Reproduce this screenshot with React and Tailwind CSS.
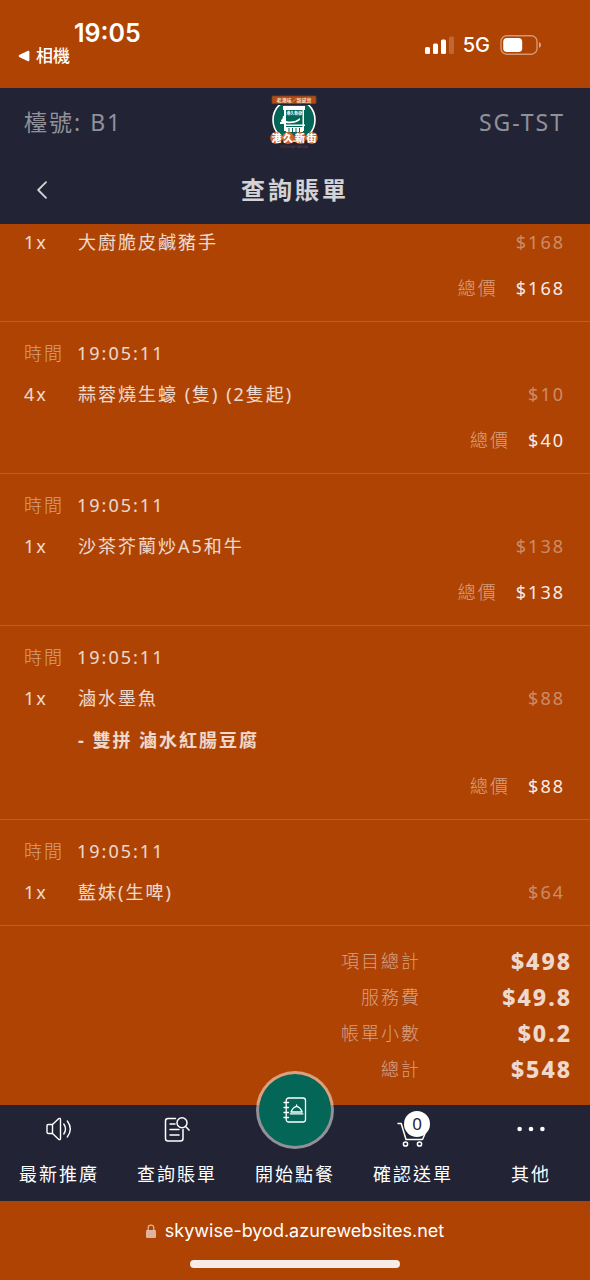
const orders = [
  { qty: 1, name: '大廚脆皮鹹豬手', price: '$168', total: '$168' },
  { time: '19:05:11', qty: 4, name: '蒜蓉燒生蠔 (隻) (2隻起)', price: '$10', total: '$40' },
  { time: '19:05:11', qty: 1, name: '沙茶芥蘭炒A5和牛', price: '$138', total: '$138' },
  { time: '19:05:11', qty: 1, name: '滷水墨魚', price: '$88', option: '- 雙拼 滷水紅腸豆腐', total: '$88' },
  { time: '19:05:11', qty: 1, name: '藍妹(生啤)', price: '$64' },
];

const summary = [
  ['項目總計', '$498'],
  ['服務費', '$49.8'],
  ['帳單小數', '$0.2'],
  ['總計', '$548'],
];

function StatusBar() {
  return (
    <div className="flex h-[88px] items-start justify-between pl-[18px] pr-12 font-['Inter','Noto_Sans_CJK_TC',sans-serif] text-white">
      <div className="pt-[18px]">
        <div className="pl-14 text-[25px] leading-[30px] font-semibold">19:05</div>
        <a href="#camera" className="flex items-center gap-[6px] text-[17px] leading-4 font-medium">
          <svg viewBox="0 0 12 12" className="size-3" fill="currentColor" aria-hidden="true">
            <path d="M1.2 5.1 10 .8q1.4-.5 1.4.9v8.6q0 1.400-1.400.9L1.200 6.900Q0 6 1.200 5.100Z" />
          </svg>
          相機
        </a>
      </div>
      <div className="flex items-center pt-[33px]">
        <svg viewBox="0 0 30 20" className="h-5 w-[30px]" fill="currentColor" aria-hidden="true">
          <rect x="0" y="12" width="5" height="7" rx="1.500" />
          <rect x="8" y="8.500" width="5" height="10.500" rx="1.500" />
          <rect x="16" y="4.500" width="5" height="14.500" rx="1.500" />
          <rect x="24" y="1.500" width="5" height="17.500" rx="1.500" opacity="0.200" />
        </svg>
        <span className="ml-2 text-xl leading-6 font-medium">5G</span>
        <svg viewBox="0 0 42 20" className="ml-[10px] h-5 w-[42px]" fill="none" aria-hidden="true">
          <rect x="1" y="0.800" width="36" height="18.400" rx="5.500" stroke="#fff" strokeOpacity="0.450" strokeWidth="1.400" />
          <rect x="3.200" y="3" width="19" height="14" rx="3.800" fill="#fff" />
          <path d="M39 7v6q2-1 2-3t-2-3Z" fill="#fff" fillOpacity="0.550" />
        </svg>
      </div>
    </div>
  );
}

function Logo() {
  return (
    <svg viewBox="0 0 48 54" className="h-[54px] w-12 tracking-normal" role="img" aria-label="港久新街">
      <circle cx="24" cy="25" r="21" fill="#046656" stroke="#fff" strokeWidth="1.600" />
      <rect x="1" y="0" width="46" height="10" fill="#222334" />
      <rect x="2" y="1" width="44" height="7.500" rx="1" fill="#b14b17" stroke="#83411f" strokeWidth="0.800" />
      <text x="24" y="6.800" textAnchor="middle" fontSize="5" fontWeight="700" fill="#f4dfce" fontFamily="'Noto Sans CJK TC', sans-serif">老港味／新感覺</text>
      <g fill="#fff">
        <path d="M13 11h22v4H13z" />
        <path d="M14 14h2v22h-2zM32.500 14h1.500v22h-1.500z" />
        <path d="M10 27h5v2h-5zM11 25q2-1 2-4h2v8h-3z" />
        <path d="M15 29.500h20v1.500H15z" />
        <path d="M16 32h17v5H16z" />
        <path d="M16 26q8 2 14-3v2q-5 4-14 3Z" />
      </g>
      <text x="24.300" y="19.500" textAnchor="middle" fontSize="4" fontWeight="700" fill="#fff" fontFamily="'Noto Sans CJK TC', sans-serif">港久新街</text>
      <path d="M19 33v4M22.500 33v4M26 33v4M29.500 33v4" stroke="#046656" strokeWidth="1" />
      <g fill="#d0652a">
        <circle cx="6.200" cy="43" r="6" />
        <circle cx="18" cy="43" r="6" />
        <circle cx="30" cy="43" r="6" />
        <circle cx="41.800" cy="43" r="6" />
      </g>
      <g fontSize="10" fontWeight="900" fill="#fff" textAnchor="middle" fontFamily="'Noto Sans CJK TC', sans-serif">
        <text x="6.400" y="46.700">港</text>
        <text x="18" y="46.700">久</text>
        <text x="30" y="46.700">新</text>
        <text x="41.600" y="46.700">街</text>
      </g>
      <text x="24" y="52.500" textAnchor="middle" fontSize="3" fill="#7b3b25" fontFamily="'Noto Sans', sans-serif">KONG KAU SAN KAI</text>
    </svg>
  );
}

function Order({ order }) {
  return (
    <section className={`border-b border-white/15 pr-[25px] pb-[19px] pl-6 ${order.time ? 'pt-[17px]' : 'pt-1'}`}>
      {order.time && (
        <div className="mb-[13px] flex gap-[13px]">
          <span className="font-light text-white/50">時間</span>
          <time className="text-white/80">{order.time}</time>
        </div>
      )}
      <div className="flex">
        <span className="w-[54px] shrink-0">{order.qty}x</span>
        <span className="grow">{order.name}</span>
        <span className="text-white/40">{order.price}</span>
      </div>
      {order.option && <div className="mt-[14px] pl-[54px] font-bold">{order.option}</div>}
      {order.total && (
        <div className="mt-[18px] flex justify-end gap-[18px]">
          <span className="font-light text-white/50">總價</span>
          <span className="text-white/90">{order.total}</span>
        </div>
      )}
    </section>
  );
}

const line = { fill: 'none', stroke: 'currentColor', strokeLinecap: 'round', strokeLinejoin: 'round' };

function SpeakerIcon() {
  return (
    <svg viewBox="0 0 26 24" className="h-6 w-[26px]" {...line} strokeWidth="1.400" aria-hidden="true">
      <path d="M6.500 7.500H2.300Q1 7.500 1 8.800v6.400q0 1.300 1.300 1.300h4.200" />
      <path d="M6.500 7.500v9M6.500 7.500 12.800 1.600q1.700-.8 1.700.9v19q0 1.700-1.700.9L6.500 16.500" />
      <path d="M17.800 7q3.400 5 0 10M21.300 4q6 8 0 16" />
    </svg>
  );
}

function BillIcon() {
  return (
    <svg viewBox="0 0 26 26" className="size-[26px]" {...line} strokeWidth="1.500" aria-hidden="true">
      <path d="M11.500 2.500H4Q1.500 2.500 1.500 5v17.500Q1.500 25 4 25h12.500q2.500 0 2.500-2.500v-9" />
      <circle cx="18" cy="6.800" r="5" />
      <path d="m21.600 10.500 3.400 3.600M6 8h5M6 13.500h9M6 19h9" />
    </svg>
  );
}

function MenuBookIcon() {
  return (
    <svg viewBox="0 0 24 26" className="h-[26px] w-6" {...line} strokeWidth="1.300" aria-hidden="true">
      <rect x="3.200" y="1" width="19.300" height="24" rx="2.500" />
      <path d="M1 5.500h4.500M1 10.500h4.500M1 15.500h4.500M1 20.500h4.500" />
      <path d="M8 15Q9.500 10.500 13.600 9.300 17.700 10.500 19.200 15Z" />
      <path d="M13.600 9.200V8M7.300 16.800h12.600" />
    </svg>
  );
}

function CartIcon() {
  return (
    <svg viewBox="0 0 32 36" className="h-9 w-8" {...line} strokeWidth="1.500" aria-hidden="true">
      <path d="M1 12.500h3.200L9 28.500h16.500l2.200-5" />
      <circle cx="8.500" cy="33" r="2.100" />
      <circle cx="22.500" cy="33" r="2.100" />
    </svg>
  );
}

function NavItem({ label, children }) {
  return (
    <button type="button" className="flex flex-col items-center">
      <span className="relative flex h-12 items-center justify-center">{children}</span>
      <span className="mt-[7px]">{label}</span>
    </button>
  );
}

export default function App() {
  return (
    <div className="flex min-h-screen flex-col bg-[#ae4304] font-['Noto_Sans','Noto_Sans_CJK_TC',sans-serif]">
      <StatusBar />
      <header className="bg-[#222334] text-white/80">
        <div className="grid h-[68px] grid-cols-3 items-center pr-[25px] pl-6 text-[23px] tracking-[2px] text-white/50">
          <span>檯號: B1</span>
          <span className="flex justify-center"><Logo /></span>
          <span className="text-right">SG-TST</span>
        </div>
        <div className="grid h-[68px] grid-cols-[36px_1fr_36px] items-center px-6">
          <button type="button" aria-label="返回" className="flex justify-center">
            <svg viewBox="0 0 10 18" className="h-[18px] w-[10px]" {...line} strokeWidth="1.800" aria-hidden="true">
              <path d="M9 1.200 1.200 9 9 16.800" />
            </svg>
          </button>
          <h1 className="text-center text-2xl font-bold tracking-[3px]">查詢賬單</h1>
        </div>
      </header>

      <main className="grow text-lg leading-7 tracking-[2px] text-white/80">
        {orders.map((order, i) => <Order key={i} order={order} />)}
        <dl className="flex flex-col pt-[17px] pr-[18px] pb-[18px]">
          {summary.map(([label, value]) => (
            <div key={label} className="flex h-9 items-center justify-end">
              <dt className="font-light text-white/50">{label}</dt>
              <dd className="w-[151px] text-right text-[23px] font-extrabold">{value}</dd>
            </div>
          ))}
        </dl>
      </main>

      <nav className="grid h-24 grid-cols-5 bg-[#222334] text-lg leading-7 tracking-[2px] text-white">
        <NavItem label="最新推廣"><SpeakerIcon /></NavItem>
        <NavItem label="查詢賬單"><BillIcon /></NavItem>
        <NavItem label="開始點餐">
          <span className="absolute -top-[34px] flex size-[78px] items-center justify-center rounded-full border-3 border-white/50 bg-[#046656] bg-clip-padding">
            <MenuBookIcon />
          </span>
        </NavItem>
        <NavItem label="確認送單">
          <CartIcon />
          <span className="absolute top-[6px] left-[7px] flex size-[26px] items-center justify-center rounded-full bg-white text-[17px] tracking-normal text-[#222334]">0</span>
        </NavItem>
        <NavItem label="其他">
          <svg viewBox="0 0 28 6" className="h-[6px] w-7" fill="currentColor" aria-hidden="true">
            <circle cx="2.600" cy="3" r="2.300" />
            <circle cx="14" cy="3" r="2.300" />
            <circle cx="25.400" cy="3" r="2.300" />
          </svg>
        </NavItem>
      </nav>

      <footer className="flex h-[79px] flex-col items-center pt-[18px] font-['Inter',sans-serif]">
        <div className="flex items-center gap-[9px] text-lg leading-6 text-white">
          <svg viewBox="0 0 10 14" className="h-[14px] w-[10px] text-white/60" fill="currentColor" aria-hidden="true">
            <rect x="0" y="6" width="10" height="8" rx="1.300" />
            <path d="M2.200 6.500V4q0-2.900 2.800-2.900T7.800 4v2.500" fill="none" stroke="currentColor" strokeWidth="1.300" />
          </svg>
          skywise-byod.azurewebsites.net
        </div>
        <div className="mt-[17px] h-2 w-[210px] rounded-full bg-[#f5ece8]" />
      </footer>
    </div>
  );
}
